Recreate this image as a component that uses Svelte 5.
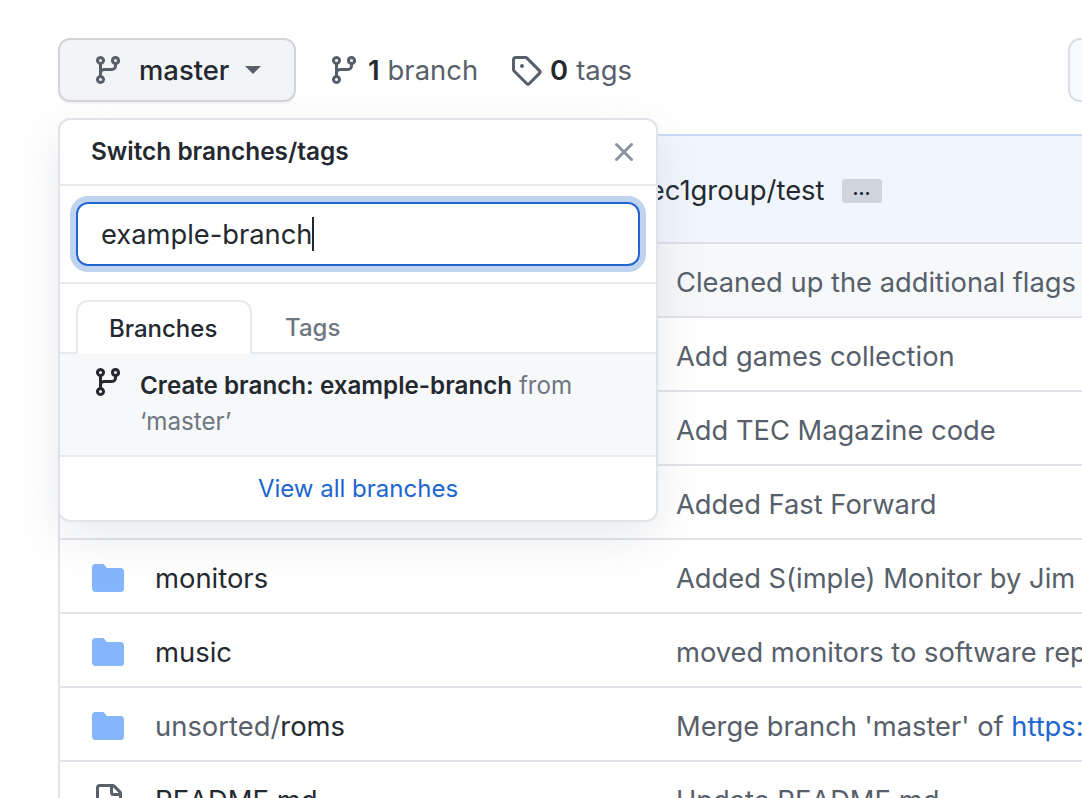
<script>
	const branchIcon = 'M9.5 3.25a2.25 2.25 0 1 1 3 2.122V6A2.5 2.5 0 0 1 10 8.5H6a1 1 0 0 0-1 1v1.128a2.251 2.251 0 1 1-1.5 0V5.372a2.25 2.25 0 1 1 1.5 0v1.836A2.493 2.493 0 0 1 6 7h4a1 1 0 0 0 1-1v-.628A2.25 2.25 0 0 1 9.5 3.25Zm-6 0a.75.75 0 1 0 1.5 0 .75.75 0 0 0-1.5 0Zm8.25-.75a.75.75 0 1 0 0 1.5.75.75 0 0 0 0-1.5ZM4.25 12a.75.75 0 1 0 0 1.5.75.75 0 0 0 0-1.5Z';
	const tagIcon = 'M1 7.775V2.75C1 1.784 1.784 1 2.75 1h5.025c.464 0 .91.184 1.238.513l6.25 6.25a1.75 1.75 0 0 1 0 2.474l-5.026 5.026a1.75 1.75 0 0 1-2.474 0l-6.25-6.25A1.752 1.752 0 0 1 1 7.775Zm1.5 0c0 .066.026.13.073.177l6.25 6.25a.25.25 0 0 0 .354 0l5.025-5.025a.25.25 0 0 0 0-.354l-6.25-6.25a.25.25 0 0 0-.177-.073H2.75a.25.25 0 0 0-.25.25ZM6 5a1 1 0 1 1 0 2 1 1 0 0 1 0-2Z';
	const folderIcon = 'M1.75 1A1.75 1.75 0 0 0 0 2.75v10.5C0 14.216.784 15 1.75 15h12.5A1.75 1.75 0 0 0 16 13.25v-8.5A1.75 1.75 0 0 0 14.25 3H7.5a.25.25 0 0 1-.2-.1l-.9-1.2C6.07 1.26 5.55 1 5 1H1.75Z';
	const fileIcon = 'M2 1.75C2 .784 2.784 0 3.75 0h6.586c.464 0 .909.184 1.237.513l2.914 2.914c.329.328.513.773.513 1.237v9.586A1.75 1.75 0 0 1 13.25 16h-9.5A1.75 1.75 0 0 1 2 14.25Zm1.75-.25a.25.25 0 0 0-.25.25v12.5c0 .138.112.25.25.25h9.5a.25.25 0 0 0 .25-.25V6h-2.75A1.75 1.75 0 0 1 9 4.25V1.5Zm6.75.062V4.25c0 .138.112.25.25.25h2.688l-.011-.013-2.914-2.914-.013-.011Z';
	const closeIcon = 'M3.72 3.72a.75.75 0 0 1 1.06 0L8 6.94l3.22-3.22a.749.749 0 0 1 1.275.326.749.749 0 0 1-.215.734L9.06 8l3.22 3.22a.749.749 0 0 1-.326 1.275.749.749 0 0 1-.734-.215L8 9.06l-3.22 3.22a.751.751 0 0 1-1.042-.018.751.751 0 0 1-.018-1.042L6.94 8 3.72 4.78a.75.75 0 0 1 0-1.06Z';

	let query = 'example-branch';

	const rows = [
		{ name: 'assembler', commit: 'Cleaned up the additional flags', hover: true },
		{ name: 'games', commit: 'Add games collection' },
		{ name: 'magazine', commit: 'Add TEC Magazine code' },
		{ name: 'misc', commit: 'Added Fast Forward' },
		{ name: 'monitors', commit: 'Added S(imple) Monitor by Jim' },
		{ name: 'music', commit: 'moved monitors to software repo' },
		{ dir: 'unsorted/', name: 'roms', commit: "Merge branch 'master' of ", link: 'https://github.com/tec1group/test' },
		{ name: 'README.md', commit: 'Update README.md', file: true }
	];
</script>

<main class="page">
	<div class="toolbar">
		<button class="branch_btn">
			<svg class="icon muted" viewBox="0 0 16 16"><path d={branchIcon} /></svg>
			<span class="branch_name">master</span>
			<span class="caret"></span>
		</button>
		<a class="stat first">
			<svg class="icon muted" viewBox="0 0 16 16"><path d={branchIcon} /></svg>
			<b>1</b> <span>branch</span>
		</a>
		<a class="stat second">
			<svg class="icon muted" viewBox="0 0 16 16"><path d={tagIcon} /></svg>
			<b>0</b> <span>tags</span>
		</a>
		<button class="right_btn"></button>
	</div>

	<div class="table">
		<div class="latest">
			<span class="latest_text">tec1group/test</span>
			<span class="more">…</span>
		</div>
		{#each rows as row}
			<div class="row" class:hover={row.hover}>
				<svg class="row_icon" class:file={row.file} viewBox="0 0 16 16"><path d={row.file ? fileIcon : folderIcon} /></svg>
				<span class="name">{#if row.dir}<span class="dir">{row.dir}</span>{/if}{row.name}</span>
				<span class="commit">{row.commit}{#if row.link}<a class="link">{row.link}</a>{/if}</span>
			</div>
		{/each}
	</div>

	<!-- dropdown sits over the toolbar and the table -->
	<div class="popup">
		<header class="popup_head">
			<span class="popup_title">Switch branches/tags</span>
			<svg class="close" viewBox="0 0 16 16"><path d={closeIcon} /></svg>
		</header>
		<div class="filter">
			<div class="input">{query}<span class="cursor"></span></div>
		</div>
		<div class="tabs">
			<span class="tab active">Branches</span>
			<span class="tab">Tags</span>
		</div>
		<div class="create">
			<svg class="icon dark" viewBox="0 0 16 16"><path d={branchIcon} /></svg>
			<p><b>Create branch: {query}</b> <span>from ‘master’</span></p>
		</div>
		<div class="view_all"><a class="link">View all branches</a></div>
	</div>
</main>

<style>
	:global(body) {
		margin: 0;
		background: #fff;
	}
	.page {
		position: relative;
		width: 1082px;
		height: 798px;
		overflow: hidden;
		padding: 38px 0 0 58px;
		box-sizing: border-box;
		font-family: Inter, "Liberation Sans", sans-serif;
		font-size: 27.4px;
		color: #24292f;
	}
	.toolbar {
		display: flex;
		align-items: center;
		height: 64px;
		margin-bottom: 32px;
	}
	.icon {
		width: 32px;
		height: 32px;
		flex: none;
	}
	.dark { fill: #24292f; }
	.muted { fill: #57606a; }
	.branch_btn {
		display: flex;
		align-items: center;
		width: 238px;
		height: 64px;
		padding: 0 0 0 32px;
		box-sizing: border-box;
		background: #f3f4f6;
		border: 2px solid #d2d4d8;
		border-radius: 12px;
		box-shadow: 0 2px 0 rgba(27, 31, 36, 0.04);
		font: inherit;
		color: inherit;
		font-weight: 500;
	}
	.branch_name {
		margin-left: 15px;
	}
	.caret {
		margin-left: 16px;
		border-top: 8px solid #57606a;
		border-left: 8px solid transparent;
		border-right: 8px solid transparent;
	}
	.stat {
		display: flex;
		align-items: center;
		gap: 8px;
		color: #57606a;
	}
	.stat b {
		color: #24292f;
		font-weight: 600;
	}
	.first { margin-left: 32px; }
	.second { margin-left: 32px; }
	.right_btn {
		position: absolute;
		left: 1068px;
		top: 38px;
		width: 60px;
		height: 64px;
		background: #f9fafb;
		border: 2px solid #dcdfe3;
		border-radius: 12px;
	}
	.table {
		width: 1100px;
		border-left: 2px solid #e3e4e9;
	}
	.latest {
		display: flex;
		align-items: center;
		height: 110px;
		padding: 2px 0 0 580px;
		box-sizing: border-box;
		background: #f1f6fe;
		border-top: 2px solid #c8dcf8;
		border-bottom: 2px solid #dfe2e8;
		white-space: nowrap;
	}
	.more {
		margin: 2px 0 0 17px;
		width: 40px;
		height: 24px;
		background: #d0d5dd;
		border-radius: 3px;
		font-size: 18px;
		font-weight: 700;
		line-height: 20px;
		text-align: center;
	}
	.row {
		display: grid;
		grid-template-columns: 32px 490px 1fr;
		column-gap: 31px;
		align-items: center;
		height: 74px;
		padding: 4px 0 0 32px;
		box-sizing: border-box;
		border-bottom: 2px solid #e3e4e9;
		white-space: nowrap;
	}
	.row.hover {
		background: #f6f8fa;
	}
	.row_icon {
		width: 32px;
		height: 32px;
		fill: #85b5fb;
	}
	.row_icon.file {
		fill: #57606a;
	}
	.dir {
		color: #57606a;
	}
	.commit {
		color: #57606a;
		font-size: 27.3px;
	}
	.link {
		color: #2065d1;
	}
	.popup {
		position: absolute;
		left: 58px;
		top: 118px;
		width: 600px;
		height: 404px;
		box-sizing: border-box;
		display: flex;
		flex-direction: column;
		background: #fff;
		border: 2px solid #e1e3e8;
		border-radius: 12px;
		box-shadow: 0 16px 48px rgba(140, 149, 159, 0.2);
		font-size: 24.2px;
	}
	.popup_head {
		display: flex;
		align-items: center;
		justify-content: space-between;
		height: 64px;
		padding: 0 16px 0 31px;
		border-bottom: 2px solid #e8e9ed;
		flex: none;
	}
	.popup_title {
		font-size: 24.4px;
		font-weight: 600;
		margin-top: -2px;
	}
	.close {
		width: 32px;
		height: 32px;
		fill: #8c959f;
	}
	.filter {
		padding: 16px;
		border-bottom: 2px solid #e8e9ed;
		flex: none;
	}
	.input {
		display: flex;
		align-items: center;
		height: 64px;
		padding-left: 23px;
		box-sizing: border-box;
		border: 2px solid #2065d1;
		border-radius: 12px;
		box-shadow: 0 0 0 6px #c0d3f1;
		font-size: 27.3px;
	}
	.cursor {
		width: 2px;
		height: 34px;
		background: #24292f;
	}
	.tabs {
		display: flex;
		height: 70px;
		padding: 16px 16px 0;
		box-sizing: border-box;
		border-bottom: 2px solid #e8e9ed;
		flex: none;
	}
	.tab {
		display: flex;
		align-items: center;
		height: 54px;
		padding: 0 33px;
		box-sizing: border-box;
		color: #6e7781;
		font-size: 24px;
		font-weight: 500;
	}
	.tab.active {
		width: 176px;
		margin-bottom: -2px;
		background: #fff;
		color: #24292f;
		border: 2px solid #e8e9ed;
		border-bottom: 0;
		border-radius: 12px 12px 0 0;
		padding: 0 0 0 31px;
	}
	.create {
		display: flex;
		gap: 16px;
		height: 103px;
		padding: 14px 32px 0 32px;
		box-sizing: border-box;
		background: #f6f8fa;
		border-bottom: 2px solid #e8e9ed;
		flex: none;
	}
	.create .icon {
		margin-top: -2px;
	}
	.create p {
		margin: 0;
		line-height: 36px;
	}
	.create b {
		font-weight: 600;
	}
	.create span {
		color: #6e7781;
	}
	.view_all {
		flex: 1;
		display: flex;
		align-items: center;
		justify-content: center;
		font-size: 24px;
	}
</style>
